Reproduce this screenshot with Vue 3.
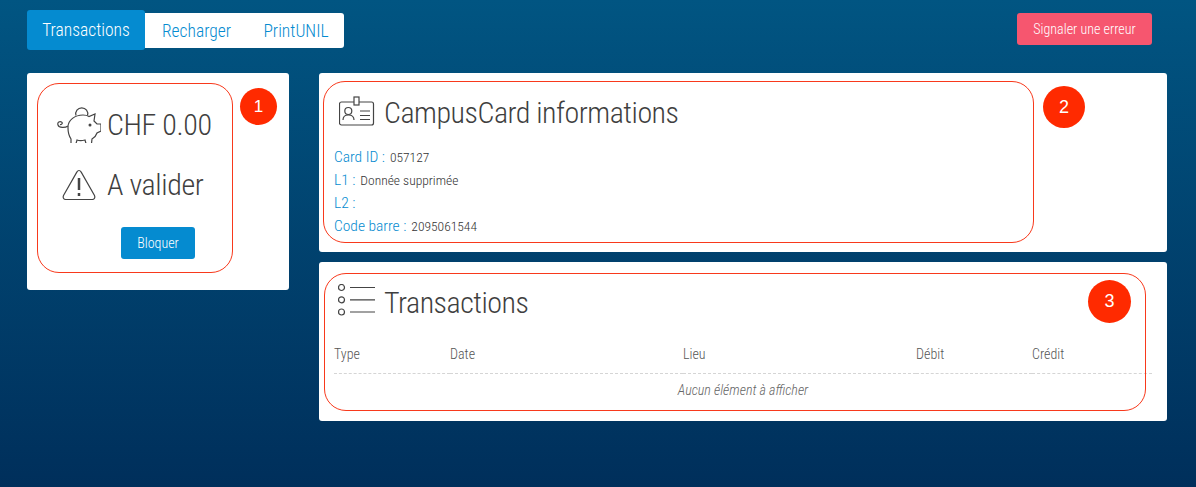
<template>
  <div class="page">
    <header class="topbar">
      <nav class="tabs">
        <a class="tab active">Transactions</a>
        <a class="tab">Recharger</a>
        <a class="tab">PrintUNIL</a>
      </nav>
      <button class="report">Signaler une erreur</button>
    </header>

    <main class="content">
      <section class="card side">
        <div class="stat stat-money">
          <svg class="icon piggy" viewBox="0 0 44 36" fill="none">
            <path d="M19 8.500a6 6 0 1 1 11.500 0" />
            <path d="M11 20c0-7 7-12 15-12 2.500 0 4.500.5 6 1.500l6-2.500-1 7 3 3h4v7l-4 2c-1 3-3 5-5 6l-.5 4.500h-5.500l-1-3.500c-3 .8-6 .8-8 0l-1 3.500h-5v-4.500c-2-3-3-7-3-11z" />
            <path d="M11 19c-3 2-9 2-10-1s2-4 3.500-3 .5 3-1.500 2.500" />
            <circle cx="33" cy="18" r="0.9" fill="#444" />
          </svg>
          <span>CHF 0.00</span>
        </div>
        <div class="stat stat-state">
          <svg class="icon warn" viewBox="0 0 34 32" fill="none">
            <path d="M17 1.500c1 0 1.600.6 2.200 1.600l13.300 23.400c1 2-.2 4-2.200 4H3.700c-2 0-3.200-2-2.200-4L14.800 3.100c.6-1 1.200-1.600 2.200-1.600z" />
            <path class="bold" d="M17 9v12M17 24v3" />
          </svg>
          <span>A valider</span>
        </div>
        <button class="block-btn">Bloquer</button>
        <div class="mark mark-1"></div>
        <div class="dot dot-1">1</div>
      </section>

      <div class="col">
        <section class="card info">
          <h2 class="title">
            <svg class="icon badge" viewBox="0 0 36 30" fill="none">
              <rect x="0.5" y="6" width="34" height="23" rx="2" />
              <rect x="15" y="1" width="5" height="8" fill="#fff" />
              <circle cx="9.300" cy="15" r="3.500" />
              <path d="M4 24c0-3.500 2.500-5 5.300-5s5.700 1.500 5.700 5M21 15h10M21 19.500h10M21 23.500h10" />
            </svg>
            CampusCard informations
          </h2>
          <dl class="fields">
            <div v-for="f in fields" :key="f.label" class="field">
              <dt>{{ f.label }} :</dt>
              <dd>{{ f.value }}</dd>
            </div>
          </dl>
          <div class="mark mark-2"></div>
          <div class="dot dot-2">2</div>
        </section>

        <section class="card list">
          <h2 class="title">
            <svg class="icon bullets" viewBox="0 0 38 32" fill="none">
              <circle cx="3.500" cy="3.500" r="3" />
              <circle cx="3.500" cy="15.800" r="3" />
              <circle cx="3.500" cy="28" r="3" />
              <path d="M12 3.500h25M12 15.800h25M12 28h25" />
            </svg>
            Transactions
          </h2>
          <table class="table">
            <thead>
              <tr>
                <th v-for="c in columns" :key="c">{{ c }}</th>
              </tr>
            </thead>
            <tbody>
              <tr>
                <td colspan="5">Aucun élément à afficher</td>
              </tr>
            </tbody>
          </table>
          <div class="mark mark-3"></div>
          <div class="dot dot-3">3</div>
        </section>
      </div>
    </main>
  </div>
</template>

<script setup>
const fields = [
  { label: "Card ID", value: "057127" },
  { label: "L1", value: "Donnée supprimée" },
  { label: "L2", value: "" },
  { label: "Code barre", value: "2095061544" },
];
const columns = ["Type", "Date", "Lieu", "Débit", "Crédit"];
</script>

<style>
html,
body {
  margin: 0;
  height: 100%;
}
</style>

<style scoped>
.page {
  box-sizing: border-box;
  height: 487px;
  overflow: hidden;
  padding: 10px 29px 0 27px;
  background: linear-gradient(180deg, #015582 0%, #002f5b 100%);
  font-family: Roboto, sans-serif;
  font-stretch: 75%;
  font-weight: 350;
  color: #3f3f3f;
}

.topbar {
  display: flex;
  justify-content: space-between;
  align-items: flex-start;
  padding-right: 15px;
}

.tabs {
  display: flex;
  align-items: center;
  height: 40px;
}

.tab {
  display: flex;
  align-items: center;
  justify-content: center;
  height: 35px;
  margin-top: 1px;
  width: 100px;
  background: #fff;
  color: #058bd0;
  font-size: 17.5px;
  border-radius: 0 3px 3px 0;
}

.tab:nth-child(2) {
  width: 103px;
  border-radius: 0;
}

.tab:nth-child(3) {
  width: 96px;
}

.tab.active {
  width: 118px;
  height: 40px;
  margin-top: 0;
  background: #058bd0;
  color: #fff;
  border-radius: 3px;
}

.report {
  width: 135px;
  height: 32px;
  margin-top: 3px;
  border: 0;
  border-radius: 3px;
  background: #f6566f;
  color: #fff;
  font: inherit;
  font-size: 14px;
}

.content {
  display: flex;
  align-items: flex-start;
  gap: 30px;
  margin-top: 23px;
}

.card {
  position: relative;
  box-sizing: border-box;
  background: #fff;
  border-radius: 3px;
}

.side {
  width: 262px;
  height: 217px;
  padding: 34px 0 0 30px;
}

.col {
  flex: 1;
  display: flex;
  flex-direction: column;
  gap: 10px;
}

.stat {
  display: flex;
  align-items: center;
  font-size: 30px;
  letter-spacing: -0.4px;
  line-height: 36px;
}

.stat span {
  margin-left: 6px;
}

.stat-state {
  margin-top: 24px;
}

.stat-state span {
  margin-left: 11px;
}

.icon {
  flex: none;
  stroke: #444;
  stroke-width: 1.2;
}

.piggy {
  width: 44px;
  height: 36px;
}

.warn {
  width: 34px;
  height: 32px;
  margin-left: 5px;
}

.bold {
  stroke-width: 2.500;
}

.block-btn {
  display: block;
  width: 74px;
  height: 32px;
  margin: 24px 0 0 64px;
  border: 0;
  border-radius: 3px;
  background: #058bd0;
  color: #fff;
  font: inherit;
  font-size: 14px;
}

.info {
  height: 179px;
  padding: 22px 15px 0;
}

.list {
  height: 159px;
  padding: 22px 15px 0;
}

.title {
  display: flex;
  align-items: center;
  margin: 0;
  font-size: 30px;
  font-weight: 350;
  letter-spacing: -0.5px;
  line-height: 36px;
}

.badge {
  width: 36px;
  height: 30px;
  margin: 0 9px 5px 5px;
}

.bullets {
  width: 38px;
  height: 32px;
  margin: 0 8px 6px 4px;
}

.fields {
  margin: 14px 0 0;
}

.field {
  display: flex;
  align-items: center;
  height: 23px;
  gap: 5px;
}

.field dt {
  color: #058bd0;
  font-size: 15.5px;
}

.field dd {
  margin: 0;
  font-size: 13.5px;
  color: #333;
}

.table {
  width: 818px;
  margin-top: 15px;
  border-collapse: collapse;
  table-layout: fixed;
}

.table th {
  box-sizing: border-box;
  padding: 0 0 2px;
  height: 36px;
  text-align: left;
  font-size: 14px;
  font-weight: 350;
  color: #555;
  border-bottom: 1px dashed #d5d5d5;
  width: 233px;
}

.table th:first-child,
.table th:nth-child(4) {
  width: 116px;
}

.table th:nth-child(5) {
  width: 120px;
}

.table td {
  box-sizing: border-box;
  padding: 0 0 2px;
  height: 36px;
  text-align: center;
  font-size: 14px;
  font-style: italic;
  color: #666;
}

/* annotations drawn over the screenshot */
.mark {
  position: absolute;
  box-sizing: border-box;
  border: 1px solid #f8391c;
  border-radius: 22px;
  pointer-events: none;
}

.mark-1 {
  left: 10px;
  top: 10px;
  width: 196px;
  height: 190px;
}

.mark-2 {
  left: 4px;
  top: 8px;
  width: 711px;
  height: 162px;
}

.mark-3 {
  left: 5px;
  top: 11px;
  width: 822px;
  height: 138px;
}

.dot {
  position: absolute;
  display: flex;
  align-items: center;
  justify-content: center;
  border-radius: 50%;
  background: #ff2a00;
  color: #fff;
  font-family: "Liberation Sans", Arial, sans-serif;
  font-stretch: normal;
  font-weight: 400;
}

.dot-1 {
  left: 213px;
  top: 15px;
  width: 37px;
  height: 37px;
  font-size: 17px;
}

.dot-2 {
  left: 724px;
  top: 13px;
  width: 42px;
  height: 42px;
  font-size: 18px;
}

.dot-3 {
  left: 769px;
  top: 18px;
  width: 43px;
  height: 43px;
  font-size: 18px;
}
</style>
